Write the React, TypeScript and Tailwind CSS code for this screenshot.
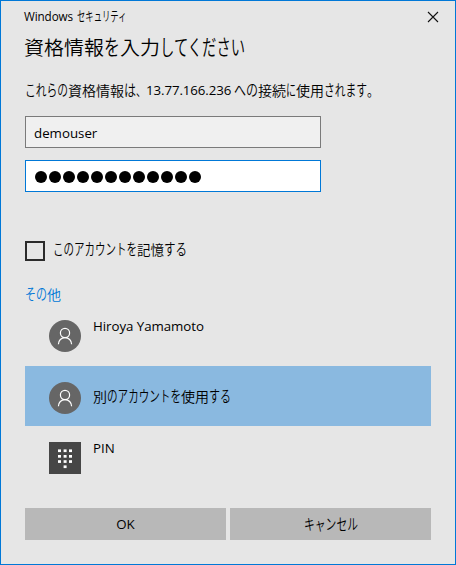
import React from 'react';

type Part = [text: string, width: number];

const startsWithKana = (text: string) => /^[\u3040-\u30ff]/.test(text);

/* Japanese UI lettering has narrow, tall kana beside full-width kanji: each run is condensed to its own width. */
function Label({ parts, size }: { parts: Part[]; size: number }) {
  return (
    <span className="flex -translate-y-px items-baseline whitespace-pre">
      {parts.map(([text, width], i) => {
        const fontSize = startsWithKana(text) ? size * 1.1 : size;
        return (
          <span key={i} className="block shrink-0" style={{ width, fontSize }}>
            <span
              className="block w-max origin-left font-['Noto_Sans_CJK_JP',sans-serif] font-[350]"
              style={{ transform: `scaleX(${width / (text.length * fontSize)})` }}
            >
              {text}
            </span>
          </span>
        );
      })}
    </span>
  );
}

function UserIcon() {
  return (
    <span className="flex size-8 shrink-0 items-center justify-center rounded-full bg-[#666666]">
      <svg width="32" height="32" viewBox="0 0 32 32" fill="none" stroke="#fff" strokeWidth="1.2">
        <circle cx="16" cy="13" r="4.6" />
        <path d="M9.4 24.3c0-4 2.9-6.7 6.6-6.7s6.6 2.7 6.6 6.7" />
      </svg>
    </span>
  );
}

function PinIcon() {
  return (
    <span className="flex size-8 shrink-0 bg-[#464646]">
      <svg width="32" height="32" viewBox="0 0 32 32" fill="#fff">
        {[7.4, 13, 18.2].map((y) =>
          [9, 14.6, 20].map((x) => <rect key={`${x}-${y}`} x={x} y={y} width="3" height="2.7" />),
        )}
        <rect x="14.6" y="23.4" width="3" height="2.7" />
      </svg>
    </span>
  );
}

export default function App() {
  return (
    <main className="flex h-[565px] w-[456px] flex-col border border-[#0078d7] bg-[#e6e6e6] px-6 font-['Open_Sans','Noto_Sans_CJK_JP',sans-serif] text-[13.3px] leading-5 text-black">
      <header className="-mr-3 flex h-8 shrink-0 items-center justify-between">
        <div className="-ml-px flex items-center">
          <span className="w-[53px] pb-0.5 text-[11.7px] tracking-[-0.1px]">Windows</span>
          <Label size={12} parts={[['セキュリティ', 50]]} />
        </div>
        <button aria-label="閉じる" className="size-5">
          <svg width="20" height="20" viewBox="0 0 20 20" stroke="#111" strokeWidth="1.1">
            <path d="M5 5l10 10M15 5L5 15" />
          </svg>
        </button>
      </header>
      <h1 className="-ml-px h-7 shrink-0 leading-7">
        <Label size={19.8} parts={[['資格情報', 80], ['を', 16], ['入力', 40], ['してください', 86]]} />
      </h1>
      <div className="mt-[19px] flex h-5 shrink-0">
        <Label size={14} parts={[['これらの', 43], ['資格情報', 56], ['は', 12], ['、', 10]]} />
        <span className="w-[88px] tracking-[-0.1px]">13.77.166.236</span>
        <Label size={14} parts={[['への', 24], ['接続', 28], ['に', 10], ['使用', 28], ['されます', 43], ['。', 12]]} />
      </div>
      <div className="mt-4 flex h-8 w-[296px] shrink-0 items-center border border-[#7a7a7a] bg-[#f0f0f0] pt-px pl-2">
        demouser
      </div>
      <div className="mt-3 flex h-8 w-[296px] shrink-0 items-center gap-[2px] border border-[#0078d7] bg-white pt-px pl-[9px]">
        {Array.from({ length: 12 }, (_, i) => (
          <span key={i} className="size-3 rounded-full bg-black" />
        ))}
      </div>
      <label className="mt-[49px] flex h-5 shrink-0 items-center">
        <span className="mr-2 size-5 border-2 border-[#2b2b2b]" />
        <span className="-mt-[3px]">
          <Label size={14} parts={[['このアカウントを', 84], ['記憶', 27], ['する', 23]]} />
        </span>
      </label>
      <div className="mt-[23px] h-5 shrink-0 text-[#0078d7]">
        <Label size={14} parts={[['その', 22], ['他', 14]]} />
      </div>
      <ul className="mt-0.5 flex shrink-0 flex-col">
        <li className="flex h-[60px] items-start gap-3 pt-[14px] pl-6">
          <UserIcon />
          <span className="-mt-1 tracking-[-0.05px]">Hiroya Yamamoto</span>
        </li>
        <li className="flex h-[60px] w-[406px] items-center gap-3 bg-[#8ab9e0] pt-1 pl-6">
          <UserIcon />
          <span className="-mt-[3px]">
            <Label size={14} parts={[['別', 14], ['のアカウントを', 74], ['使用', 28], ['する', 22]]} />
          </span>
        </li>
        <li className="flex h-[60px] items-start gap-3 pt-4 pl-6">
          <PinIcon />
          <span className="-mt-1">PIN</span>
        </li>
      </ul>
      <div className="mt-[22px] flex gap-1">
        <button className="flex h-8 w-[201px] items-center justify-center bg-[#b8b8b8]">OK</button>
        <button className="flex h-8 w-[201px] items-center justify-center bg-[#b8b8b8]">
          <Label size={14} parts={[['キャンセル', 54]]} />
        </button>
      </div>
    </main>
  );
}
